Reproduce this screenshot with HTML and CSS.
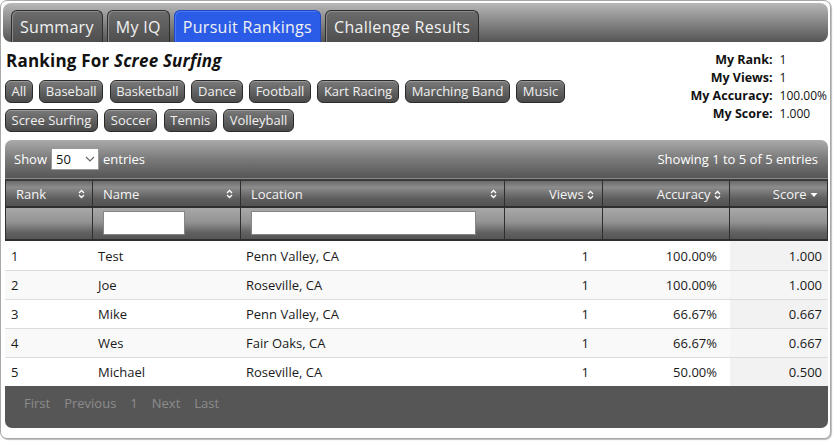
FILE: index.html
```html
<!DOCTYPE html>
<html>
<head>
<meta charset="utf-8">
<link rel="stylesheet" href="styles.css">
</head>
<body>
<div class="widget">
  <div class="tabbar">
    <div class="tab">Summary</div>
    <div class="tab">My IQ</div>
    <div class="tab active">Pursuit Rankings</div>
    <div class="tab">Challenge Results</div>
  </div>
  <div class="panel">
    <div class="top">
      <div class="left">
        <h2 class="title">Ranking For <em>Scree Surfing</em></h2>
        <div class="buttons">
          <span class="btn">All</span><span class="btn">Baseball</span><span class="btn">Basketball</span><span class="btn">Dance</span><span class="btn">Football</span><span class="btn">Kart Racing</span><span class="btn">Marching Band</span><span class="btn">Music</span><span class="btn">Scree Surfing</span><span class="btn">Soccer</span><span class="btn">Tennis</span><span class="btn">Volleyball</span>
        </div>
      </div>
      <div class="stats">
        <div class="lbl">My Rank:</div><div class="val">1</div>
        <div class="lbl">My Views:</div><div class="val">1</div>
        <div class="lbl">My Accuracy:</div><div class="val">100.00%</div>
        <div class="lbl">My Score:</div><div class="val">1.000</div>
      </div>
    </div>
    <div class="dt">
      <div class="toolbar">
        <div class="length">Show <span class="select">50<svg width="10" height="6" viewBox="0 0 10 6"><polyline points="1,1 5,5 9,1" fill="none" stroke="#666" stroke-width="1.2"/></svg></span> entries</div>
        <div class="info">Showing 1 to 5 of 5 entries</div>
      </div>
      <table>
        <colgroup>
          <col style="width:88px"><col style="width:148px"><col style="width:264px"><col style="width:98px"><col style="width:127px"><col style="width:98px">
        </colgroup>
        <thead>
          <tr class="hdr">
            <th class="l"><span class="hc"><span>Rank</span><svg class="sort" width="7" height="10" viewBox="0 0 7 10"><polyline points="1,4 3.5,1.5 6,4" fill="none" stroke="#fff" stroke-width="1.3"/><polyline points="1,6 3.5,8.5 6,6" fill="none" stroke="#fff" stroke-width="1.3"/></svg></span></th>
            <th class="l"><span class="hc"><span>Name</span><svg class="sort" width="7" height="10" viewBox="0 0 7 10"><polyline points="1,4 3.5,1.5 6,4" fill="none" stroke="#fff" stroke-width="1.3"/><polyline points="1,6 3.5,8.5 6,6" fill="none" stroke="#fff" stroke-width="1.3"/></svg></span></th>
            <th class="l"><span class="hc"><span>Location</span><svg class="sort" width="7" height="10" viewBox="0 0 7 10"><polyline points="1,4 3.5,1.5 6,4" fill="none" stroke="#fff" stroke-width="1.3"/><polyline points="1,6 3.5,8.5 6,6" fill="none" stroke="#fff" stroke-width="1.3"/></svg></span></th>
            <th class="r">Views <svg class="sort" width="7" height="10" viewBox="0 0 7 10"><polyline points="1,4 3.5,1.5 6,4" fill="none" stroke="#fff" stroke-width="1.3"/><polyline points="1,6 3.5,8.5 6,6" fill="none" stroke="#fff" stroke-width="1.3"/></svg></th>
            <th class="r">Accuracy <svg class="sort" width="7" height="10" viewBox="0 0 7 10"><polyline points="1,4 3.5,1.5 6,4" fill="none" stroke="#fff" stroke-width="1.3"/><polyline points="1,6 3.5,8.5 6,6" fill="none" stroke="#fff" stroke-width="1.3"/></svg></th>
            <th class="r sc">Score <svg class="sort" width="8" height="10" viewBox="0 0 8 10"><polygon points="0.5,3 7.5,3 4,7" fill="#fff"/></svg></th>
          </tr>
          <tr class="filter">
            <th></th>
            <th><span class="inp name"></span></th>
            <th><span class="inp loc"></span></th>
            <th></th><th></th><th></th>
          </tr>
        </thead>
        <tbody>
          <tr class="odd"><td class="c1">1</td><td class="c2">Test</td><td class="c3">Penn Valley, CA</td><td class="c4">1</td><td class="c5">100.00%</td><td class="c6">1.000</td></tr>
          <tr class="even"><td class="c1">2</td><td class="c2">Joe</td><td class="c3">Roseville, CA</td><td class="c4">1</td><td class="c5">100.00%</td><td class="c6">1.000</td></tr>
          <tr class="odd"><td class="c1">3</td><td class="c2">Mike</td><td class="c3">Penn Valley, CA</td><td class="c4">1</td><td class="c5">66.67%</td><td class="c6">0.667</td></tr>
          <tr class="even"><td class="c1">4</td><td class="c2">Wes</td><td class="c3">Fair Oaks, CA</td><td class="c4">1</td><td class="c5">66.67%</td><td class="c6">0.667</td></tr>
          <tr class="odd"><td class="c1">5</td><td class="c2">Michael</td><td class="c3">Roseville, CA</td><td class="c4">1</td><td class="c5">50.00%</td><td class="c6">0.500</td></tr>
        </tbody>
      </table>
      <div class="footer">
        <span>First</span><span>Previous</span><span>1</span><span>Next</span><span>Last</span>
      </div>
    </div>
  </div>
</div>
</body>
</html>
```

FILE: styles.css
```css
* { box-sizing: border-box; }
html, body { margin: 0; padding: 0; background: #fff; }
body {
  font-family: "Open Sans", "DejaVu Sans", sans-serif;
  font-size: 13px;
  color: #222;
  width: 833px;
  height: 441px;
  overflow: hidden;
}
.widget {
  width: 831px;
  height: 439px;
  border: 1px solid #a8a8a8;
  border-radius: 7px;
  padding: 2px;
  background: #fff;
  box-shadow: 1px 1px 1px #bbb;
}
.tabbar {
  height: 39px;
  border-radius: 8px;
  background: linear-gradient(#b8b8b8, #8a8a8a 45%, #555);
  display: flex;
  align-items: flex-end;
  gap: 4px;
  padding: 0 0 0 8px;
}
.tab {
  height: 32px;
  padding: 1px 8px 0;
  border: 1px solid #2e2e2e;
  border-bottom: none;
  border-radius: 6px 6px 0 0;
  background: linear-gradient(#6c6c6c, #4e4e4e);
  box-shadow: inset 1px 1px 0 #8a8a8a;
  color: #f2f2f2;
  font-size: 16px;
  letter-spacing: 0.3px;
  line-height: 31px;
  white-space: nowrap;
}
.tab.active {
  background: #2b5ce8;
  border-color: #1e48c8;
  box-shadow: inset 1px 1px 0 #4a78f0;
}
.panel { padding: 7px 1px 0 2px; }
.top {
  display: flex;
  justify-content: space-between;
  height: 91px;
}
.title {
  margin: 2px 0 9px 1px;
  font-size: 17px;
  letter-spacing: 0.2px;
  font-weight: bold;
  color: #111;
  line-height: 20px;
}
.title em { font-style: italic; }
.buttons {
  display: flex;
  flex-wrap: wrap;
  width: 580px;
  gap: 6px 6.5px;
}
.btn {
  height: 23px;
  padding: 0 5.5px;
  border: 1px solid #2a2a2a;
  border-radius: 6px;
  background: linear-gradient(#7a7a7a, #4a4a4a);
  box-shadow: inset 0 1px 0 #999;
  color: #f0f0f0;
  line-height: 21px;
  font-size: 13px;
  white-space: nowrap;
}
.stats {
  display: grid;
  grid-template-columns: auto auto;
  column-gap: 7px;
  align-content: start;
  margin-top: 2px;
  font-size: 12.5px;
  line-height: 18px;
  color: #111;
}
.stats .lbl { text-align: right; font-weight: bold; }
.stats .val { text-align: left; font-size: 12px; }
.dt { width: 823px; }
.toolbar {
  height: 39px;
  border-radius: 7px 7px 0 0;
  background: linear-gradient(#ababab, #7a7a7a 50%, #565656);
  color: #fff;
  display: flex;
  justify-content: space-between;
  align-items: center;
  padding: 0 10px 1px 9px;
  border-bottom: 1px solid #8a8a8a;
}
.length { display: flex; align-items: center; gap: 4px; }
.select {
  display: inline-flex;
  align-items: center;
  justify-content: space-between;
  width: 48px;
  height: 22px;
  background: #fff;
  color: #111;
  border: 1px solid #999;
  padding: 0 3px 0 4px;
}
table {
  border-collapse: separate;
  border-spacing: 0;
  table-layout: fixed;
  width: 823px;
}
th {
  font-weight: normal;
  color: #f4f4f4;
  padding: 0;
  border-right: 1px solid #2e2e2e;
}
th:first-child { border-left: 1px solid #2e2e2e; }
tr.hdr th {
  height: 29px;
  background: linear-gradient(#6a6a6a, #8c8c8c 25%, #5e5e5e 70%, #525252);
  border-top: 2px solid #3a3a3a;
  border-bottom: 2px solid #2e2e2e;
}
tr.hdr th.l { text-align: left; padding: 0 7px 0 10px; }
tr.hdr th.r { text-align: right; padding: 0 8px 0 0; }
tr.hdr th.sc { padding-right: 9px; }
.hc { display: flex; justify-content: space-between; align-items: center; }
.sort { vertical-align: -1px; }
tr.filter th {
  height: 33px;
  background: linear-gradient(#a8a8a8, #939393 45%, #606060 80%, #555);
  border-bottom: 2px solid #2e2e2e;
  text-align: left;
  padding: 0 0 1px 10px;
}
.inp {
  display: block;
  height: 24px;
  background: #fff;
  border: 1px solid #858585;
}
.inp.name { width: 82px; }
.inp.loc { width: 225px; }
td {
  height: 29px;
  padding: 0 6px;
  border-top: 1px solid #dcdcdc;
  color: #1a1a1a;
  white-space: nowrap;
}
tbody tr:first-child td { border-top: none; }
tr.odd td { background: #fff; }
tr.even td { background: #f9f9f9; }
td.c1 { padding-left: 6px; }
td.c2 { padding-left: 5px; }
td.c3 { padding-left: 5px; }
td.c4 { text-align: right; padding-right: 14px; }
td.c5 { text-align: right; padding-right: 13px; }
td.c6 { text-align: right; padding-right: 6px; }
tr.odd td.c6 { background: #f2f2f2; }
tr.even td.c6 { background: #f5f5f5; }
.footer {
  height: 42px;
  background: #565656;
  border-radius: 0 0 7px 7px;
  color: #8c8c8c;
  display: flex;
  gap: 14px;
  padding: 8px 0 0 19px;
}
```
